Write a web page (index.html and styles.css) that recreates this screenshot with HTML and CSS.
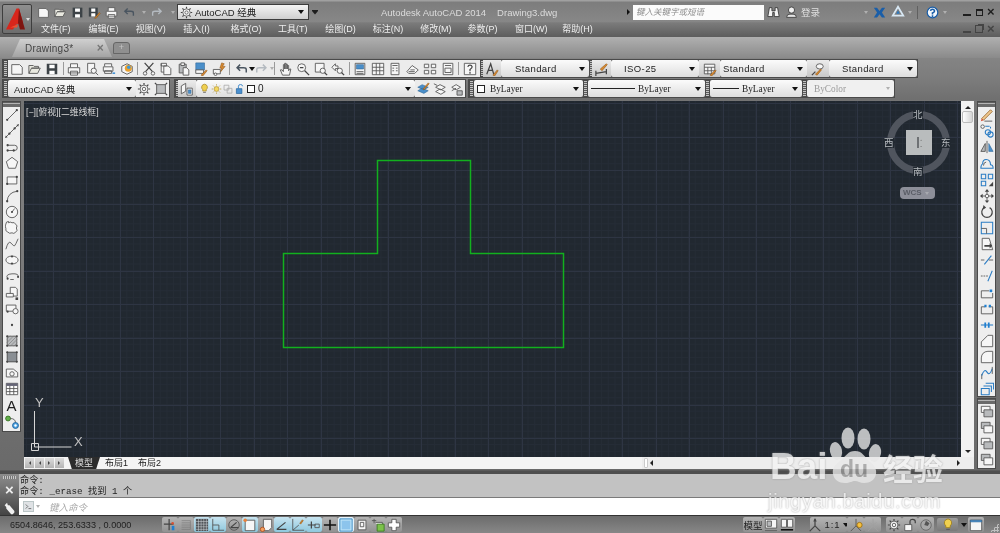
FILE: index.html
```html
<!DOCTYPE html>
<html lang="zh">
<head>
<meta charset="utf-8">
<title>AutoCAD 2014</title>
<link rel="stylesheet" href="styles.css">
</head>
<body>
<svg class="defs" aria-hidden="true">
  <symbol id="new" viewBox="0 0 16 16"><path class="w" d="M2 3h9l3 3v8H2z"/></symbol>
  <symbol id="open" viewBox="0 0 16 16"><path class="y" d="M1 13V4h5l1 1h5v2H4l-3 6h10l3-6H4"/></symbol>
  <symbol id="save" viewBox="0 0 16 16"><path class="d" d="M2 2h12v12H2z"/><path class="w0" d="M5 3h6v4H5zM5 10h6v4H5z"/></symbol>
  <symbol id="saveas" viewBox="0 0 16 16"><path class="d" d="M1 2h11v11H1z"/><path class="w0" d="M4 3h5v4H4zM4 9h5v4H4z"/><path class="o" d="M8 15l6-7 1 1-5 6z"/></symbol>
  <symbol id="print" viewBox="0 0 16 16"><path class="w" d="M4 6V2h8v4M1.500 6.500h13v6h-13zM4 10.500h8V15H4z"/></symbol>
  <symbol id="preview" viewBox="0 0 16 16"><path class="w" d="M3 1.500h8v11H3z"/><circle class="w" cx="10" cy="10" r="3"/><path class="l" d="M12 12l3 3"/></symbol>
  <symbol id="plot" viewBox="0 0 16 16"><path class="w" d="M3 5V2h8v3M1.500 5.500h11v5h-11zM3 10h8v3H3z"/><path class="b" d="M12 12h3v1.500h-3z"/></symbol>
  <symbol id="ball" viewBox="0 0 16 16"><path class="w" d="M2 5l6-3 6 3v6l-6 3-6-3z"/><circle cx="9.500" cy="7" r="4" fill="#e8a030"/><circle cx="10" cy="6" r="2" fill="#3e9ad8"/></symbol>
  <symbol id="cut" viewBox="0 0 16 16"><path class="l2" d="M3 1l9 10M13 1L4 11"/><circle class="w" cx="3.500" cy="13" r="2"/><circle class="w" cx="12.500" cy="13" r="2"/></symbol>
  <symbol id="copy" viewBox="0 0 16 16"><path class="w" d="M2.500 1.500h6v3h-6zM2.500 1.500v10h3M5.500 4.500h5l3 3v7h-8z"/></symbol>
  <symbol id="paste" viewBox="0 0 16 16"><path class="g" d="M2.500 2.500h8v10h-8z"/><path class="w" d="M4.500 1h4v3h-4zM7 6.500h4l2.500 2.500v6H7z"/></symbol>
  <symbol id="match" viewBox="0 0 16 16"><path class="bl" d="M2 1h10v8H2z"/><path class="w" d="M2 9h9v4H2z"/><path class="o" d="M8 15l6-6 1 1-5 6z"/></symbol>
  <symbol id="block" viewBox="0 0 16 16"><path class="w" d="M1.500 8.500h8v5h-8z"/><circle class="w" cx="4" cy="14" r="1.500"/><path class="o" d="M11 1l3 1-2 3h3l-5 6 1-4H9z"/></symbol>
  <symbol id="undo" viewBox="0 0 16 16"><path class="bd" d="M14 12V8.500Q14 6.500 11 6.500H4M7 3L3.500 6.500 7 10"/></symbol>
  <symbol id="redo" viewBox="0 0 16 16"><path class="bf" d="M2 12V8.500Q2 6.500 5 6.500h7M9 3l3.500 3.500L9 10"/></symbol>
  <symbol id="hand" viewBox="0 0 16 16"><path class="w" d="M4 15L1.500 9l2 0 1.500 2V3h1.500v5V1.500H8V8V2.500h1.500V8V4H11v6l1-2h1.500L12 15z"/></symbol>
  <symbol id="zrt" viewBox="0 0 16 16"><circle class="w" cx="6.500" cy="6.500" r="4.500"/><path class="l2" d="M10 10l5 5M4.500 6.500h4"/></symbol>
  <symbol id="zwin" viewBox="0 0 16 16"><path class="w" d="M1.500 1.500h10v10h-10z"/><circle class="w" cx="10" cy="10" r="3"/><path class="l2" d="M12 12l3 3"/></symbol>
  <symbol id="zprev" viewBox="0 0 16 16"><path class="w" d="M1 6l4-4v2.500h3v3H5V10z"/><circle class="w" cx="10" cy="10" r="3"/><path class="l2" d="M12 12l3 3"/></symbol>
  <symbol id="props" viewBox="0 0 16 16"><path class="w" d="M2.500 1.500h11v13h-11z"/><path class="bl" d="M4 3h8v5H4z"/><path class="l" d="M4 11h8M4 13h8"/></symbol>
  <symbol id="dc" viewBox="0 0 16 16"><path class="w" d="M1.500 1.500h13v13h-13zM6 1.500v13M10 1.500v13M1.500 6h13M1.500 10h13"/></symbol>
  <symbol id="palette" viewBox="0 0 16 16"><path class="w" d="M3.500 1.500h9v13h-9z"/><path class="l" d="M5 4h6M5 7h2M9 7h2M5 10h2M9 10h2"/></symbol>
  <symbol id="sheet" viewBox="0 0 16 16"><path class="w" d="M1 11l6-7 7 5-4 4H3z"/><path class="l" d="M3 11h7M5 9h5"/></symbol>
  <symbol id="mark" viewBox="0 0 16 16"><path class="w" d="M1.500 2.500h5v4h-5zM9.500 2.500h5v4h-5zM1.500 9.500h5v4h-5zM9.500 9.500h5v4h-5z"/></symbol>
  <symbol id="calc" viewBox="0 0 16 16"><path class="w" d="M2.500 1.500h11v13h-11z"/><path class="l" d="M4.500 4h7M4.500 7h7v5h-7z"/></symbol>
  <symbol id="help" viewBox="0 0 16 16"><path class="w" d="M1.500 1.500h13v13h-13z"/><path class="l2" d="M5.500 5.500Q6 3.500 8 3.500t2.500 2Q10.500 7 8 8.500v2M8 11.500v2"/></symbol>
  <symbol id="txtstyle" viewBox="0 0 16 16"><path class="l2" d="M2 14L6.500 2 10 14M4 9.500h5"/><path class="o" d="M9 15l5-6 1 1-4 6z"/></symbol>
  <symbol id="dimstyle" viewBox="0 0 16 16"><path class="l2" d="M1 13l12-2M1 10v6M13 8v6"/><path class="o" d="M6 8l7-6 1 1-6 7z"/></symbol>
  <symbol id="tblstyle" viewBox="0 0 16 16"><path class="w" d="M1.500 2.500h12v11h-12zM1.500 6h12M1.500 10h12M5.500 6v8M9.500 6v8"/><path class="o" d="M8 15l6-6 1 1-5 6z"/></symbol>
  <symbol id="mlstyle" viewBox="0 0 16 16"><path class="w" d="M10 2q4 0 4 3t-4 3-4-3 4-3z"/><path class="l2" d="M1 15l4-4"/><path class="o" d="M5 14l6-6 1 1-5 6z"/></symbol>
  <symbol id="gear" viewBox="0 0 16 16"><circle class="w" cx="8" cy="8" r="4.500"/><circle class="w" cx="8" cy="8" r="2"/><path class="l2" d="M8 1v2M8 13v2M1 8h2M13 8h2M3 3l1.500 1.500M11.500 11.500L13 13M13 3l-1.500 1.500M3 13l1.500-1.500"/></symbol>
  <symbol id="lockui" viewBox="0 0 16 16"><path class="g" d="M3 3h10v10H3z"/><path class="l2" d="M1 1l2 2M15 1l-2 2M1 15l2-2M15 15l-2-2"/></symbol>
  <symbol id="layers" viewBox="0 0 16 16"><path class="w" d="M1.500 4.500l5-3v9l-5 3zM8 7h6v8H8z"/><path class="bl" d="M9.500 9h3v4h-3z"/></symbol>
  <symbol id="bulb" viewBox="0 0 16 16"><path fill="#f0d050" stroke="#a08020" d="M8 1a4.500 4.500 0 0 1 2.500 8v2h-5V9A4.500 4.500 0 0 1 8 1z"/><path class="l" d="M6 13h4"/></symbol>
  <symbol id="sun" viewBox="0 0 16 16"><circle cx="8" cy="8" r="3.500" fill="#f4d860" stroke="#b09030"/><path class="sunray" d="M8 1v2M8 13v2M1 8h2M13 8h2M3 3l1.500 1.500M11.500 11.500L13 13M13 3l-1.500 1.500M3 13l1.500-1.500"/></symbol>
  <symbol id="freeze" viewBox="0 0 16 16"><path class="lg" d="M1.500 2.500h7v7h-7zM6 7h7v7H6z"/></symbol>
  <symbol id="lockb" viewBox="0 0 16 16"><path class="bd2" d="M5 7V4q0-2.500 3-2.500T11 4"/><path fill="#4a90d0" stroke="#20609a" d="M2 7.500h8v7H2z"/></symbol>
  <symbol id="lyrmatch" viewBox="0 0 16 16"><path class="bl" d="M2 10l5-3 7 3-5 3zM2 6l5-3 7 3-5 3z"/><path class="o" d="M8 8l6-7 1 1-6 7z"/></symbol>
  <symbol id="lyrcur" viewBox="0 0 16 16"><path class="w" d="M3 6l5-3 6 3-5 3zM3 11l5-3 6 3-5 3z"/><path class="l" d="M1 2l4 2"/></symbol>
  <symbol id="lyrprev" viewBox="0 0 16 16"><path class="w" d="M2 6l5-3 5 3-5 3zM2 10l5-3"/><path class="g" d="M8 10h6v5H8z"/></symbol>
  <symbol id="line" viewBox="0 0 16 16"><path class="l" d="M2.500 13.500l11-11"/><circle class="pt" cx="2.500" cy="13.500" r="1.300"/><circle class="pt" cx="13.500" cy="2.500" r="1.300"/></symbol>
  <symbol id="xline" viewBox="0 0 16 16"><path class="l" d="M1 15L15 1"/><circle class="pt" cx="5" cy="11" r="1.300"/><circle class="pt" cx="11" cy="5" r="1.300"/><path class="pt" d="M0 16l1-3 2 2zM16 0l-1 3-2-2z"/></symbol>
  <symbol id="pline" viewBox="0 0 16 16"><path class="l" d="M3 6h8q3 0 3 3t-3 3H3"/><circle class="pt" cx="3" cy="6" r="1.300"/><circle class="pt" cx="3" cy="12" r="1.300"/><circle class="pt" cx="10" cy="12" r="1.300"/></symbol>
  <symbol id="poly" viewBox="0 0 16 16"><path class="w" d="M8 1.500l6.500 5-2.500 7.500H4L1.500 6.500z"/></symbol>
  <symbol id="rect" viewBox="0 0 16 16"><path class="w" d="M2.500 4.500h11v8h-11z"/><circle class="pt" cx="2.500" cy="12.500" r="1.300"/><circle class="pt" cx="13.500" cy="4.500" r="1.300"/></symbol>
  <symbol id="arc" viewBox="0 0 16 16"><path class="l" d="M2.500 14Q3 4 14 2.500"/><circle class="pt" cx="2.500" cy="14" r="1.300"/><circle class="pt" cx="14" cy="2.500" r="1.300"/></symbol>
  <symbol id="circle" viewBox="0 0 16 16"><circle class="w" cx="8" cy="8" r="6.500"/><path class="l" d="M8 8l3-4"/><circle class="pt" cx="8" cy="8" r="1.200"/></symbol>
  <symbol id="cloud" viewBox="0 0 16 16"><path class="w" d="M4 2q2-1.500 4 0 3-1 4 1.500 3 2 1 4.500 2 3-1 5-2 2-4 .5-3 1.500-5-1-3-1-2-4-1.500-3 0-5 0-3 3-3z"/></symbol>
  <symbol id="spline" viewBox="0 0 16 16"><path class="l" d="M1 14Q4 3 7 7t4 3 4-8"/></symbol>
  <symbol id="ellipse" viewBox="0 0 16 16"><ellipse class="w" cx="8" cy="8" rx="7" ry="4.500"/><circle class="pt" cx="8" cy="4" r="1.200"/><circle class="pt" cx="8" cy="12" r="1.200"/></symbol>
  <symbol id="earc" viewBox="0 0 16 16"><path class="l" d="M3 11Q0 6 8 5.500t7 3.500"/><path class="l" d="M6 12h4"/><circle class="pt" cx="3" cy="11" r="1.200"/><circle class="pt" cx="15" cy="9" r="1.200"/></symbol>
  <symbol id="insert" viewBox="0 0 16 16"><path class="w" d="M6 1.500h6l2 2v8H6z"/><path class="w" d="M1.500 8.500h8v4h-8z"/><path class="pt" d="M12 13h3v3h-3z"/></symbol>
  <symbol id="wblock" viewBox="0 0 16 16"><path class="w" d="M1.500 3.500h11v7h-11z"/><circle class="w" cx="12" cy="10.500" r="3"/><circle class="pt" cx="3" cy="11" r="1.200"/></symbol>
  <symbol id="point" viewBox="0 0 16 16"><circle class="pt" cx="8" cy="8" r="1.300"/></symbol>
  <symbol id="hatch" viewBox="0 0 16 16"><path class="g" d="M2.500 2.500h11v11h-11z"/><path class="sm" d="M2 6l4-4M2 10l8-8M2 14L14 2M6 14l8-8M10 14l4-4"/><circle class="pt" cx="2.500" cy="2.500" r="1.200"/><circle class="pt" cx="13.500" cy="13.500" r="1.200"/><circle class="pt" cx="13.500" cy="2.500" r="1.200"/><circle class="pt" cx="2.500" cy="13.500" r="1.200"/></symbol>
  <symbol id="grad" viewBox="0 0 16 16"><path fill="#8a8f94" stroke="#444" d="M2.500 2.500h11v11h-11z"/><circle class="pt" cx="2.500" cy="2.500" r="1.200"/><circle class="pt" cx="13.500" cy="13.500" r="1.200"/><circle class="pt" cx="13.500" cy="2.500" r="1.200"/><circle class="pt" cx="2.500" cy="13.500" r="1.200"/></symbol>
  <symbol id="region" viewBox="0 0 16 16"><path class="w" d="M1.500 3.500h8l5 4v5h-13z"/><circle class="w" cx="8" cy="9" r="2.500"/></symbol>
  <symbol id="table" viewBox="0 0 16 16"><path fill="#fff" stroke="#555" d="M1.500 1.500h13v13h-13z"/><path fill="#667" d="M1.500 1.500h13v3h-13z"/><path class="l" d="M1.500 7.500h13M1.500 11h13M5.500 4.500v10M10 4.500v10"/></symbol>
  <symbol id="addsel" viewBox="0 0 16 16"><circle cx="3.500" cy="4" r="2.800" fill="#63b04a" stroke="#357020"/><path class="l" d="M6 4q6 0 6 5"/><circle cx="12" cy="12" r="3.400" fill="#4aa0e0" stroke="#20609a"/><circle cx="12" cy="12" r="1.400" fill="#fff"/></symbol>
  <symbol id="erase" viewBox="0 0 16 16"><path fill="#f0c890" stroke="#9a6a30" d="M2 12L12 2l2 2L4 14z"/><path fill="#d84a30" d="M2 12l2 2-3 1z"/><path class="l" d="M5 15h9"/></symbol>
  <symbol id="copyo" viewBox="0 0 16 16"><circle class="w" cx="3" cy="3" r="2"/><path class="bd2" d="M6 2.500h5M12 3v2"/><circle class="bd2" cx="9" cy="9.500" r="3"/><circle class="bd2" cx="12" cy="12" r="3"/></symbol>
  <symbol id="mirror" viewBox="0 0 16 16"><path class="l" d="M8 1v14"/><path class="g" d="M6 4v9H1z"/><path class="bl" d="M10 4v9h5z"/></symbol>
  <symbol id="offset" viewBox="0 0 16 16"><path class="bd2" d="M1 14h14q0-4-3-4 0-6-5-6-4 0-4 5-2 1-2 5z"/><path class="l" d="M4 11q0-4 3-4"/></symbol>
  <symbol id="array" viewBox="0 0 16 16"><path class="bd2" d="M1.500 1.500h5v5h-5zM9.500 1.500h5v5h-5zM1.500 9.500h5v5h-5z"/><path class="pt" d="M10 15l5-5v5z"/></symbol>
  <symbol id="move" viewBox="0 0 16 16"><path class="l" d="M2 8h12M8 2v12"/><path class="pt" d="M8 0l2.500 3h-5zM8 16l2.500-3h-5zM0 8l3-2.500v5zM16 8l-3-2.500v5z"/><circle class="w" cx="8" cy="8" r="2"/></symbol>
  <symbol id="rotate" viewBox="0 0 16 16"><path class="l2" d="M5 3a6 6 0 1 0 6 0"/><path class="pt" d="M4 0l3 3-4 2z"/></symbol>
  <symbol id="scale" viewBox="0 0 16 16"><path class="bd2" d="M1.500 1.500h13v13h-13z"/><path class="l" d="M1.500 8.500h6v6"/></symbol>
  <symbol id="stretch" viewBox="0 0 16 16"><path class="w" d="M2.500 1.500h8l4 13h-12z"/><path class="pt" d="M5 9h6V7l3 3-3 3v-2H5z"/></symbol>
  <symbol id="trim" viewBox="0 0 16 16"><path class="l" d="M1 8h4"/><path class="bd2" d="M5 13L13 3"/><path class="l" d="M10 8h5"/></symbol>
  <symbol id="extend" viewBox="0 0 16 16"><path class="sm2" d="M1 8h8"/><path class="bd2" d="M9 14l5-12"/></symbol>
  <symbol id="brkpt" viewBox="0 0 16 16"><path class="l" d="M1.500 13.500v-8h9M14.500 8v5.500h-13"/><path class="pt3" d="M11 4h3v3h-3z"/></symbol>
  <symbol id="brk" viewBox="0 0 16 16"><path class="l" d="M1.500 5.500v8h13v-8M6 5.500H1.500M10 5.500h4.500"/><path class="pt3" d="M5 3h2.500v3H5zM10 3h2.500v3H10z"/></symbol>
  <symbol id="join" viewBox="0 0 16 16"><path class="bd2" d="M1 8h14"/><path class="pt3" d="M5 5h2v6H5zM9 5h2v6H9z"/></symbol>
  <symbol id="chamfer" viewBox="0 0 16 16"><path class="w" d="M1.500 14.500V9L9 1.500h5.500v13z"/></symbol>
  <symbol id="fillet" viewBox="0 0 16 16"><path class="w" d="M1.500 14.500V9Q2 2 9 1.500h5.500v13z"/></symbol>
  <symbol id="blend" viewBox="0 0 16 16"><path class="l" d="M2 15V9"/><path class="bd2" d="M2 11Q5 2 8 7t6-4"/><path class="l" d="M14 9V1"/></symbol>
  <symbol id="explode" viewBox="0 0 16 16"><path class="bd2" d="M1.500 7.500h9v7h-9zM4 4.500h9v7M6.500 1.500h9v7"/></symbol>
  <symbol id="front" viewBox="0 0 16 16"><path class="w" d="M1.500 1.500h10v7h-10z"/><path class="g" d="M4.500 5.500h10v8h-10z"/></symbol>
  <symbol id="back" viewBox="0 0 16 16"><path class="g" d="M1.500 1.500h10v7h-10z"/><path class="w" d="M4.500 5.500h10v8h-10z"/></symbol>
  <symbol id="snap" viewBox="0 0 16 16"><path class="l2" d="M1 7h11M7 1v13"/><path class="pt3" d="M10 9h3v5h-3z"/><circle cx="11" cy="6" r="1.500" fill="#d85030"/></symbol>
  <symbol id="snapg" viewBox="0 0 16 16"><path class="sm" d="M3 3h10M3 5.500h10M3 8h10M3 10.500h10M3 13h10M13 3v10"/></symbol>
  <symbol id="gridb" viewBox="0 0 16 16"><path class="gb" d="M1 1h14v14H1z"/><path class="gw" d="M4 1v14M7 1v14M10 1v14M13 1v14M1 4h14M1 7h14M1 10h14M1 13h14"/></symbol>
  <symbol id="ortho" viewBox="0 0 16 16"><path class="l" d="M2 1v13h13M2 8h7v6"/></symbol>
  <symbol id="polar" viewBox="0 0 16 16"><circle class="l" cx="8" cy="8" r="6"/><path class="l2" d="M4 11h9M4 11l7-6"/></symbol>
  <symbol id="osnap" viewBox="0 0 16 16"><path class="w" d="M2.500 2.500h11v12h-11z"/><circle cx="2.500" cy="2.500" r="2" fill="#e8803a"/></symbol>
  <symbol id="d3snap" viewBox="0 0 16 16"><path class="w" d="M5 1.500h9.500V11L11 14.500H5z"/><circle cx="4" cy="13" r="2.500" fill="#f4a060" stroke="#b05020"/></symbol>
  <symbol id="otrack" viewBox="0 0 16 16"><path class="l2" d="M2 13L12 5M2 13h11"/></symbol>
  <symbol id="ducs" viewBox="0 0 16 16"><path class="l" d="M2 1v13h13M2 14l7-6"/><path class="o" d="M10 6l3-4 1 1-3 4z"/></symbol>
  <symbol id="dyn" viewBox="0 0 16 16"><path class="l2" d="M1 8h9M5 4v8"/><path class="l" d="M9 7h5v4H9z"/></symbol>
  <symbol id="lwt" viewBox="0 0 16 16"><path class="k" d="M1 8h14M8 2v12"/></symbol>
  <symbol id="tpy" viewBox="0 0 16 16"><path fill="#bfe4f7" stroke="#2a80c0" d="M1 1h14v14H1z"/><path fill="#8cc4ec" d="M3 3h10v10H3z"/></symbol>
  <symbol id="qp" viewBox="0 0 16 16"><path class="w" d="M3.500 2.500h9v11h-9z"/><path class="l" d="M6 5h4v5H6z"/></symbol>
  <symbol id="sc" viewBox="0 0 16 16"><path class="l" d="M1 3h5M3.500 1v5"/><path class="w" d="M5 5h8v8"/><path fill="#7cc24a" stroke="#3a7a20" d="M7 7h8v8H7z"/></symbol>
  <symbol id="am" viewBox="0 0 16 16"><path fill="#fff" stroke="#555" d="M5.500 1.500h5v4h4v5h-4v4h-5v-4h-4v-5h4z"/></symbol>
  <symbol id="modelb" viewBox="0 0 16 16"><path class="w" d="M1.500 1.500h13v10h-13z"/><path class="g" d="M3.500 3.500h5v6h-5z"/><path class="l" d="M1 14.500h14"/></symbol>
  <symbol id="layoutb" viewBox="0 0 16 16"><path class="w" d="M1.500 1.500h6v9h-6zM8.500 1.500h6v9h-6z"/><path class="k" d="M1 13.500h14"/></symbol>
  <symbol id="annot" viewBox="0 0 16 16"><path class="l2" d="M8 1v8M8 9l-6 6M8 9l6 6"/><path class="pt" d="M8 0l2 4H6z"/></symbol>
  <symbol id="annoa" viewBox="0 0 16 16"><path class="l" d="M8 1v8M8 9l-6 6M8 9l6 6"/><circle cx="12" cy="8" r="3" fill="#f4c040" stroke="#a07010"/></symbol>
  <symbol id="annob" viewBox="0 0 16 16"><path class="lg" d="M8 1v8M8 9l-6 6M8 9l6 6M4 5l8 6M12 5l-8 6"/></symbol>
  <symbol id="lock2" viewBox="0 0 16 16"><path class="l2" d="M8 7V4q0-2.500 3-2.500T14 4v2"/><path class="w" d="M2 7.500h8v7H2z"/></symbol>
  <symbol id="hw" viewBox="0 0 16 16"><circle fill="#a8a8a8" stroke="#666" cx="8" cy="8" r="6"/><path fill="#555" d="M8 3l4 3-2 3-4-1z"/></symbol>
  <symbol id="winp" viewBox="0 0 16 16"><path class="w" d="M1.500 2.500h13v12h-13z"/><path class="bl" d="M1.500 2.500h13v2h-13z"/></symbol>
  <symbol id="binoc" viewBox="0 0 16 16"><path fill="#f4f4f4" stroke="#333" d="M3 2h3v4h4V2h3l2 11H9V8H7v5H1z"/></symbol>
  <symbol id="user" viewBox="0 0 16 16"><circle fill="#f0f0f0" stroke="#333" cx="8" cy="5" r="3.800"/><path fill="#e4e4e4" stroke="#333" d="M2 14q0-4 4-4h4q4 0 4 4z"/></symbol>
  <symbol id="xchg" viewBox="0 0 16 16"><path fill="#1a5ea8" d="M1 2h4l3 4 3-4h4l-4 6 4 6h-4l-3-4-3 4H1l4-6z"/></symbol>
  <symbol id="tri" viewBox="0 0 16 16"><path fill="none" stroke="#d8e8f4" stroke-width="2" d="M8 2l6 10H2z"/><path fill="#2a78c0" d="M8 6l2 4H6z"/></symbol>
  <symbol id="qm" viewBox="0 0 16 16"><circle fill="#f4f8fc" stroke="#1a5ea8" stroke-width="1.500" cx="8" cy="8" r="6.500"/><path fill="none" stroke="#1a5ea8" stroke-width="2" d="M5.500 6Q6 4 8 4t2.500 2Q10.500 7.500 8 8.500v2M8 11.500v2"/></symbol>
  <symbol id="cmdp" viewBox="0 0 16 16"><path fill="#dfe2e5" stroke="#9aa" d="M.5.5h15v15H.5z"/><path fill="none" stroke="#444" d="M4 5l3 3-3 3M8 11h4"/></symbol>
  <symbol id="wrench" viewBox="0 0 16 16"><path fill="#f0f0f0" d="M2 4l3-3 1 3 2 0 6 7 0 2-2 2-2 0-6-7 0-2z"/></symbol>
</svg>

<div class="app">
  <header class="top">
    <div class="logo">
      <svg class="logo-a" viewBox="0 0 20 22"><path fill="#d8261c" d="M0 21L10.500 0H13l4 14-7 2-3 5z"/><path fill="#7e1410" d="M13 0l6 21h-5l-2-7z"/><path fill="#f05030" d="M4 19l5-2 3-1-1 3z"/></svg>
      <span class="caret dark"></span>
    </div>
    <div class="top-main">
      <div class="qat">
        <div class="qat-icons">
          <svg class="ic"><use href="#new"/></svg>
          <svg class="ic"><use href="#open"/></svg>
          <svg class="ic"><use href="#save"/></svg>
          <svg class="ic"><use href="#saveas"/></svg>
          <svg class="ic"><use href="#print"/></svg>
          <svg class="ic"><use href="#undo"/></svg>
          <span class="caret"></span>
          <svg class="ic"><use href="#redo"/></svg>
          <span class="caret"></span>
        </div>
        <div class="ws-combo">
          <svg class="ic"><use href="#gear"/></svg>
          <span class="ws-name">AutoCAD 经典</span>
          <span class="caret black"></span>
        </div>
        <span class="qat-more"></span>
        <div class="title-text"><span>Autodesk AutoCAD 2014</span><span>Drawing3.dwg</span></div>
        <span class="tri-right"></span>
        <div class="search">键入关键字或短语</div>
        <svg class="ic bin"><use href="#binoc"/></svg>
        <svg class="ic usr"><use href="#user"/></svg>
        <span class="login">登录</span>
        <span class="caret mr"></span>
        <svg class="ic xc"><use href="#xchg"/></svg>
        <svg class="ic tri"><use href="#tri"/></svg>
        <span class="caret c-tri"></span>
        <span class="vsep"></span>
        <svg class="ic qm"><use href="#qm"/></svg>
        <span class="caret c-qm"></span>
        <div class="win-btns"><span class="wb-min"></span><span class="wb-max"></span><span class="wb-x">×</span></div>
      </div>
      <nav class="menu">
        <span>文件(F)</span><span>编辑(E)</span><span>视图(V)</span><span>插入(I)</span><span>格式(O)</span><span>工具(T)</span><span>绘图(D)</span><span>标注(N)</span><span>修改(M)</span><span>参数(P)</span><span>窗口(W)</span><span>帮助(H)</span>
        <div class="win-btns doc"><span class="wb-min"></span><span class="wb-rest"></span><span class="wb-x">×</span></div>
      </nav>
    </div>
  </header>

  <div class="tabstrip">
    <div class="doc-tab"><span>Drawing3*</span><span class="tab-x">×</span></div>
    <div class="new-tab">+</div>
  </div>

  <div class="tools">
    <div class="toolrow">
      <div class="bar">
        <span class="grip"></span>
        <div class="icons i1">
          <svg class="ic"><use href="#new"/></svg><svg class="ic"><use href="#open"/></svg><svg class="ic"><use href="#save"/></svg>
          <i class="sep"></i>
          <svg class="ic"><use href="#print"/></svg><svg class="ic"><use href="#preview"/></svg><svg class="ic"><use href="#plot"/></svg><svg class="ic"><use href="#ball"/></svg>
          <i class="sep"></i>
          <svg class="ic"><use href="#cut"/></svg><svg class="ic"><use href="#copy"/></svg><svg class="ic"><use href="#paste"/></svg><svg class="ic"><use href="#match"/></svg><svg class="ic"><use href="#block"/></svg>
          <i class="sep"></i>
          <svg class="ic"><use href="#undo"/></svg><span class="caret black"></span><svg class="ic"><use href="#redo"/></svg><span class="caret"></span>
          <i class="sep"></i>
          <svg class="ic"><use href="#hand"/></svg><svg class="ic"><use href="#zrt"/></svg><svg class="ic"><use href="#zwin"/></svg><svg class="ic"><use href="#zprev"/></svg>
          <i class="sep"></i>
          <svg class="ic"><use href="#props"/></svg><svg class="ic"><use href="#dc"/></svg><svg class="ic"><use href="#palette"/></svg><svg class="ic"><use href="#sheet"/></svg><svg class="ic"><use href="#mark"/></svg><svg class="ic"><use href="#calc"/></svg>
          <i class="sep"></i>
          <svg class="ic"><use href="#help"/></svg>
        </div>
        <span class="grip thin"></span>
        <div class="icons i0 i18"><svg class="ic"><use href="#txtstyle"/></svg></div>
        <div class="combo c-style p14"><span>Standard</span><span class="caret black"></span></div>
        <span class="grip thin"></span>
        <div class="icons i0 i19"><svg class="ic"><use href="#dimstyle"/></svg></div>
        <div class="combo c-style p13"><span>ISO-25</span><span class="caret black"></span></div>
        <div class="icons i0 i21"><svg class="ic"><use href="#tblstyle"/></svg></div>
        <div class="combo c-style2 p3"><span>Standard</span><span class="caret black"></span></div>
        <div class="icons i0 i22"><svg class="ic"><use href="#mlstyle"/></svg></div>
        <div class="combo c-style p13"><span>Standard</span><span class="caret black"></span></div>
      </div>
    </div>
    <div class="toolrow">
      <div class="bar">
        <span class="grip"></span>
        <div class="combo c-ws"><span>AutoCAD 经典</span><span class="caret black"></span></div>
        <div class="icons i2"><svg class="ic"><use href="#gear"/></svg><svg class="ic"><use href="#lockui"/></svg></div>
      </div>
      <div class="bar">
        <span class="grip thin"></span>
        <div class="icons i0 i18"><svg class="ic"><use href="#layers"/></svg></div>
        <div class="combo c-layer">
          <svg class="lic"><use href="#bulb"/></svg><svg class="lic"><use href="#sun"/></svg><svg class="lic"><use href="#freeze"/></svg><svg class="lic"><use href="#lockb"/></svg>
          <i class="swatch"></i><span class="lname">0</span><span class="caret black"></span>
        </div>
        <div class="icons i3"><svg class="ic"><use href="#lyrmatch"/></svg><svg class="ic"><use href="#lyrcur"/></svg><svg class="ic"><use href="#lyrprev"/></svg></div>
      </div>
      <div class="bar serif">
        <span class="grip"></span>
        <div class="combo c-color"><i class="swatch"></i><span class="lname">ByLayer</span><span class="caret black"></span></div>
        <span class="grip"></span>
        <div class="combo c-ltype"><i class="ln l1"></i><span>ByLayer</span><span class="caret black"></span></div>
        <span class="grip"></span>
        <div class="combo c-lw"><i class="ln l2w"></i><span>ByLayer</span><span class="caret black"></span></div>
        <span class="grip"></span>
        <div class="combo c-pl"><span>ByColor</span><span class="caret"></span></div>
      </div>
    </div>
  </div>

  <main class="main">
    <aside class="vbar left">
      <span class="hgrip"></span>
      <div class="vicons">
        <svg class="ic"><use href="#line"/></svg><svg class="ic"><use href="#xline"/></svg><svg class="ic"><use href="#pline"/></svg><svg class="ic"><use href="#poly"/></svg><svg class="ic"><use href="#rect"/></svg><svg class="ic"><use href="#arc"/></svg><svg class="ic"><use href="#circle"/></svg><svg class="ic"><use href="#cloud"/></svg><svg class="ic"><use href="#spline"/></svg><svg class="ic"><use href="#ellipse"/></svg><svg class="ic"><use href="#earc"/></svg><svg class="ic"><use href="#insert"/></svg><svg class="ic"><use href="#wblock"/></svg><svg class="ic"><use href="#point"/></svg><svg class="ic"><use href="#hatch"/></svg><svg class="ic"><use href="#grad"/></svg><svg class="ic"><use href="#region"/></svg><svg class="ic"><use href="#table"/></svg><span class="bigA">A</span><svg class="ic"><use href="#addsel"/></svg>
      </div>
    </aside>

    <section class="workspace">
      <div class="ws-top">
        <div class="canvas">
          <span class="vp-label">[−][俯视][二维线框]</span>
          <svg class="drawing" viewBox="0 0 937 356" width="937" height="356">
            <path class="shape" d="M353.500 59.500h93v93h93v94h-280v-94h94z"/>
            <path class="ucs" d="M10.500 310v36h37M7.500 342.500h7v7h-7z"/>
          </svg>
          <span class="ucs-y">Y</span><span class="ucs-x">X</span>
          <div class="cube">
            <div class="ring"></div>
            <span class="dir n">北</span><span class="dir s">南</span><span class="dir e">东</span><span class="dir w2">西</span>
            <div class="face"><i></i><b>⁚</b></div>
            <div class="wcs">WCS<span class="caret wc"></span></div>
          </div>
        </div>
        <div class="vscroll">
          <span class="up"></span>
          <span class="thumb"></span>
          <span class="down"></span>
        </div>
      </div>
      <div class="ws-bottom">
        <div class="nav"><span class="n-first"></span><span class="n-prev"></span><span class="n-next"></span><span class="n-last"></span></div>
        <div class="ltabs"><span class="ltab on">模型</span><span class="ltab">布局1</span><span class="ltab">布局2</span></div>
        <div class="hscroll"><span class="hthumb"></span><span class="hl"></span><span class="hr"></span></div>
      </div>
    </section>

    <div class="rcol">
      <aside class="vbar right">
        <span class="hgrip"></span>
        <div class="vicons r">
          <svg class="ic"><use href="#erase"/></svg><svg class="ic"><use href="#copyo"/></svg><svg class="ic"><use href="#mirror"/></svg><svg class="ic"><use href="#offset"/></svg><svg class="ic"><use href="#array"/></svg><svg class="ic"><use href="#move"/></svg><svg class="ic"><use href="#rotate"/></svg><svg class="ic"><use href="#scale"/></svg><svg class="ic"><use href="#stretch"/></svg><svg class="ic"><use href="#trim"/></svg><svg class="ic"><use href="#extend"/></svg><svg class="ic"><use href="#brkpt"/></svg><svg class="ic"><use href="#brk"/></svg><svg class="ic"><use href="#join"/></svg><svg class="ic"><use href="#chamfer"/></svg><svg class="ic"><use href="#fillet"/></svg><svg class="ic"><use href="#blend"/></svg><svg class="ic"><use href="#explode"/></svg>
        </div>
      </aside>
      <aside class="vbar right second">
        <span class="hgrip"></span>
        <div class="vicons r">
          <svg class="ic"><use href="#front"/></svg><svg class="ic"><use href="#back"/></svg><svg class="ic"><use href="#front"/></svg><svg class="ic"><use href="#back"/></svg>
        </div>
      </aside>
    </div>
  </main>

  <section class="command">
    <div class="cmd-side">
      <span class="cmd-grip"></span>
      <span class="cmd-x">×</span>
      <svg class="ic wr"><use href="#wrench"/></svg>
    </div>
    <div class="cmd-body">
      <div class="cmd-hist"><p>命令:</p><p>命令: _erase 找到 1 个</p></div>
      <div class="cmd-in"><svg class="ic"><use href="#cmdp"/></svg><span class="caret"></span><span class="ph">键入命令</span></div>
    </div>
  </section>

  <footer class="status">
    <span class="coords">6504.8646, 253.6333 , 0.0000</span>
    <div class="sgroup toggles">
      <span class="tg"><svg class="ic"><use href="#snap"/></svg></span>
      <span class="tg"><svg class="ic"><use href="#snapg"/></svg></span>
      <span class="tg on"><svg class="ic"><use href="#gridb"/></svg></span>
      <span class="tg on"><svg class="ic"><use href="#ortho"/></svg></span>
      <span class="tg"><svg class="ic"><use href="#polar"/></svg></span>
      <span class="tg on"><svg class="ic"><use href="#osnap"/></svg></span>
      <span class="tg"><svg class="ic"><use href="#d3snap"/></svg></span>
      <span class="tg on"><svg class="ic"><use href="#otrack"/></svg></span>
      <span class="tg on"><svg class="ic"><use href="#ducs"/></svg></span>
      <span class="tg on"><svg class="ic"><use href="#dyn"/></svg></span>
      <span class="tg"><svg class="ic"><use href="#lwt"/></svg></span>
      <span class="tg hot"><svg class="ic"><use href="#tpy"/></svg></span>
      <span class="tg"><svg class="ic"><use href="#qp"/></svg></span>
      <span class="tg"><svg class="ic"><use href="#sc"/></svg></span>
      <span class="tg"><svg class="ic"><use href="#am"/></svg></span>
    </div>
    <div class="sgroup s-model"><span class="tg wide">模型</span><span class="tg"><svg class="ic"><use href="#modelb"/></svg></span><span class="tg"><svg class="ic"><use href="#layoutb"/></svg></span></div>
    <div class="sgroup s-anno"><span class="tg scale"><svg class="ic"><use href="#annot"/></svg>1:1<i class="caret black"></i></span><span class="tg t17"><svg class="ic"><use href="#annoa"/></svg></span><span class="tg t17"><svg class="ic"><use href="#annob"/></svg></span></div>
    <div class="sgroup s-work"><span class="tg"><svg class="ic"><use href="#gear"/></svg></span><span class="tg"><svg class="ic"><use href="#lock2"/></svg></span><span class="tg"><svg class="ic"><use href="#hw"/></svg></span></div>
    <div class="sgroup s-iso"><span class="tg iso"><svg class="ic"><use href="#bulb"/></svg></span></div>
    <span class="caret black scaret"></span>
    <div class="sgroup s-clean"><span class="tg"><svg class="ic"><use href="#winp"/></svg></span></div>
    <span class="resize"></span>
  </footer>

  <div class="watermark">
    <svg class="paw" viewBox="0 0 56 60"><ellipse cx="22" cy="12" rx="6.500" ry="10.500"/><ellipse cx="38" cy="13" rx="6.500" ry="10.500"/><ellipse cx="10" cy="25" rx="6" ry="9" transform="rotate(-12 10 25)"/><ellipse cx="49" cy="27" rx="6" ry="9" transform="rotate(10 49 27)"/><path d="M29 25c7 0 9 5 14 10 5 4 8 8 7 13-1 6-6 9-12 9-4 0-6-2-9-2s-5 2-10 2c-6 0-11-3-12-9-1-6 2-9 7-13 6-5 8-10 15-10z"/></svg>
    <span class="wm-bai">Bai</span>
    <span class="wm-du">du</span>
    <span class="wm-cn">经验</span>
    <span class="wm-url">jingyan.baidu.com</span>
  </div>
</div>
</body>
</html>
```

FILE: styles.css
```css
* { box-sizing: border-box; }
html, body { margin: 0; padding: 0; }
body { width: 1000px; height: 533px; overflow: hidden; background: #6e6e6e; font-family: "Liberation Sans", "Noto Sans CJK SC", sans-serif; font-size: 10px; }
p { margin: 0; }
.defs { position: absolute; width: 0; height: 0; }

/* svg icon palette */
.w { fill: #f6f6f6; stroke: #565656; stroke-width: 1; }
.w0 { fill: #fff; }
.d { fill: #3d4347; }
.y { fill: #e9e9e0; stroke: #555; }
.o { fill: #d88a30; stroke: #8a4e10; stroke-width: .6; }
.l { fill: none; stroke: #555; stroke-width: 1; }
.l2 { fill: none; stroke: #444; stroke-width: 1.400; }
.lg { fill: none; stroke: #a0a0a0; stroke-width: 1; }
.b { fill: #1f7fd0; }
.bl { fill: #4a8fca; stroke: #2a5f90; stroke-width: .6; }
.g { fill: #b8babc; stroke: #565656; }
.bd { fill: none; stroke: #4a5560; stroke-width: 1.700; }
.bf { fill: none; stroke: #b4bac0; stroke-width: 1.700; }
.bd2 { fill: none; stroke: #2a7cc4; stroke-width: 1.200; }
.pt { fill: #444; }
.pt3 { fill: #1f7fd0; }
.sm { fill: none; stroke: #777; stroke-width: .7; }
.sm2 { fill: none; stroke: #555; stroke-width: 1; stroke-dasharray: 2 1; }
.sunray { fill: none; stroke: #b09030; stroke-width: 1; }
.gb { fill: #505458; }
.gw { fill: none; stroke: #d0d4d8; stroke-width: .6; }
.k { fill: none; stroke: #111; stroke-width: 1.800; }

.ic { width: 16px; height: 16px; flex: none; display: block; }
.lic { width: 11px; height: 14px; flex: none; display: block; margin-right: 1px; }

.caret { display: inline-block; flex: none; width: 0; height: 0; border-left: 2.500px solid transparent; border-right: 2.500px solid transparent; border-top: 3px solid #b0b0b0; }
.caret.black { border-top-color: #111; border-left-width: 3.500px; border-right-width: 3.500px; border-top-width: 4px; }
.caret.dark { border-top-color: #ddd; }

.app { position: relative; width: 1000px; height: 533px; display: flex; flex-direction: column; filter: blur(.35px); }

/* title + menu */
.top { height: 37px; flex: none; display: flex; background: linear-gradient(#a0a0a0 0 1px, #7d7d7d 2px, #878787 58%, #7b7b7b 62%, #5d5d5d); }
.logo { width: 30px; height: 30px; margin: 4px 0 0 2px; flex: none; display: flex; align-items: center; padding-left: 3px; background: linear-gradient(#8f8f8f, #6d6d6d); border: 1px solid #3e3e3e; border-radius: 2px; }
.logo-a { width: 20px; height: 23px; }
.top-main { flex: 1; min-width: 0; display: flex; flex-direction: column; padding-top: 3px; }
.qat { height: 18px; display: flex; align-items: center; }
.qat-icons { margin-left: 5px; width: 140px; flex: none; display: flex; align-items: center; }
.qat-icons .ic { width: 13px; height: 13px; margin-right: 4px; }
.qat-icons .caret { margin: 0 5px 0 3px; }
.ws-combo { width: 132px; height: 16px; display: flex; align-items: center; gap: 2px; padding: 0 4px 0 2px; background: linear-gradient(#f4f4f4, #cfcfcf); border: 1px solid #3c3c3c; color: #222; font-size: 9.500px; flex: none; }
.ws-combo .ic { width: 13px; height: 13px; }
.ws-name { flex: 1; }
.qat-more { width: 6px; height: 5px; margin-left: 3px; flex: none; background: #1d1d1d; clip-path: polygon(0 0, 100% 0, 100% 30%, 50% 100%, 0 30%); }
.title-text { width: 309px; padding-left: 63px; display: flex; gap: 11px; color: #dcdcdc; font-size: 9.500px; white-space: nowrap; flex: none; }
.tri-right { width: 0; height: 0; flex: none; margin-right: 3px; border-left: 3px solid #111; border-top: 3px solid transparent; border-bottom: 3px solid transparent; }
.search { width: 131px; height: 15px; flex: none; background: #fbfbfb; color: #8e8e8e; font-size: 8.500px; font-style: italic; padding: 1px 0 0 3px; line-height: 13px; }
.bin { width: 13px; height: 13px; margin-left: 3px; }
.usr { width: 13px; height: 13px; margin-left: 5px; }
.login { margin-left: 3px; color: #e0e0e0; font-size: 9.500px; width: 20px; flex: none; }
.mr { margin: 0 5px 0 43px; }
.xc { width: 13px; height: 13px; }
.tri { width: 14px; height: 14px; margin-left: 5px; }
.c-tri { margin-left: 3px; }
.vsep { width: 1px; height: 13px; background: #606060; margin: 0 8px 0 5px; flex: none; }
.qm { width: 13px; height: 13px; }
.c-qm { margin-left: 4px; }
.win-btns { margin-left: auto; margin-right: 5px; width: 32px; display: flex; align-items: center; justify-content: space-between; color: #1e1e1e; flex: none; }
.wb-min { width: 8px; height: 2px; margin-top: 6px; background: #1e1e1e; }
.wb-max { width: 7px; height: 7px; border: 1px solid #1e1e1e; border-top-width: 2px; }
.wb-rest { width: 8px; height: 8px; border: 1px solid #444; box-shadow: 2px -2px 0 -1px #444; }
.wb-x { font-size: 13px; font-weight: 700; line-height: 10px; width: 8px; }
.doc { color: #444; }
.doc .wb-min { background: #444; }
.menu { height: 15px; display: flex; align-items: center; padding-left: 9px; color: #eee; font-size: 9px; }
.menu > span { width: 47.400px; flex: none; white-space: nowrap; }

/* tab strip */
.tabstrip { height: 21px; flex: none; display: flex; align-items: flex-end; padding: 0 0 1px 12px; background: linear-gradient(#b0b0b0, #8a8a8a); }
.doc-tab { width: 100px; height: 18px; display: flex; align-items: center; padding: 0 8px 0 13px; justify-content: space-between; color: #444; font-size: 10px; background: linear-gradient(#d0d0d0, #a4a4a4); letter-spacing: .25px; clip-path: polygon(0 100%, 8% 0, 92% 0, 100% 100%); }
.tab-x { color: #777; font-size: 12px; font-weight: 700; }
.new-tab { width: 17px; height: 12px; margin: 0 0 3px 1px; border: 1px solid #666; border-radius: 3px 3px 0 0; background: #8f8f8f; color: #c4c4c4; font-size: 9px; line-height: 9px; text-align: center; }

/* toolbars */
.tools { height: 42px; flex: none; padding-top: 1px; background: linear-gradient(#848484, #7c7c7c 50%, #6f6f6f); display: flex; flex-direction: column; gap: 1px; }
.toolrow { height: 19px; display: flex; gap: 4px; padding-left: 2px; }
.bar { height: 19px; display: flex; align-items: stretch; background: #4a4a4a; padding: 1px; font-size: 9.500px; color: #222; flex: none; }
.serif { font-family: "Liberation Serif", serif; font-size: 9.300px; margin-left: -2px; }
.grip { width: 5px; flex: none; background: repeating-linear-gradient(#c4c4c4 0 1px, #5a5a5a 1px 2px); margin: 1px 0; border-left: 1px solid #4a4a4a; border-right: 1px solid #4a4a4a; }
.grip.thin { width: 3px; border-right: 0; }
.icons { display: flex; align-items: center; background: #ececec; flex: none; }
.icons .ic { width: 14px; height: 14px; }
.i0 { justify-content: center; background: linear-gradient(#ececec, #c8c8c8); }
.i18 { width: 18px; }
.i19 { width: 19px; }
.i21 { width: 21px; }
.i22 { width: 22px; }
.i1 { width: 472px; padding: 0 3px 0 2px; justify-content: space-between; }
.i1 .caret { margin: 0 -3px; }
.i2 { width: 33px; justify-content: space-around; }
.i3 { width: 50px; justify-content: space-around; }
.sep { width: 1px; height: 13px; background: #9a9a9a; flex: none; }
.combo { display: flex; align-items: center; flex: none; padding: 0 4px 0 5px; background: linear-gradient(#fbfbfb, #dedede); border-radius: 2px; white-space: nowrap; }
.combo > .caret { margin-left: auto; }
.p14 { padding-left: 14px; letter-spacing: .4px; }
.p13 { padding-left: 13px; letter-spacing: .4px; }
.p3 { padding-left: 3px; letter-spacing: .4px; }
.c-style { width: 88px; }
.c-style2 { width: 87px; }
.c-ws { width: 128px; padding-left: 6px; }
.c-layer { width: 219px; padding-left: 3px; font-size: 10px; }
.swatch { width: 8px; height: 8px; flex: none; background: #fff; border: 1px solid #222; margin-right: 3px; }
.lname { white-space: nowrap; }
.c-color { width: 109px; padding-left: 3px; }
.c-color .lname { margin-left: 2px; }
.c-ltype { width: 117px; padding-left: 3px; }
.c-lw { width: 92px; padding-left: 3px; }
.ln { height: 1px; background: #222; flex: none; margin-right: 3px; }
.l1 { width: 44px; }
.l2w { width: 26px; }
.c-pl { width: 87px; padding-left: 7px; color: #9a9a9a; background: #f0f0f0; }

/* main */
.main { height: 370px; flex: none; display: flex; background: linear-gradient(#747474, #7e7e7e 30%, #6a6a6a); }
.vbar { background: #eeeeee; border: 1px solid #4a4a4a; display: flex; flex-direction: column; flex: none; }
.left { width: 19px; height: 331px; margin: 1px 0 0 2px; }
.hgrip { height: 5px; flex: none; background: linear-gradient(#5e5e5e 0 1px, #b4b4b4 1px 2px, #6a6a6a 2px); }
.vicons { display: grid; grid-auto-rows: 16.150px; justify-items: center; align-items: center; }
.vicons .ic { width: 14px; height: 14px; }
.bigA { font-size: 15px; line-height: 16px; color: #222; }
.workspace { width: 950px; margin: 1px 0 0 3px; flex: none; display: flex; flex-direction: column; }
.ws-top { display: flex; height: 356px; flex: none; }
.canvas { position: relative; width: 937px; height: 356px; overflow: hidden;
  background-color: #212830;
  background-image:
    linear-gradient(90deg, #2e3543 0 1px, transparent 1px 33px, #2e3543 33px 34px, transparent 34px),
    linear-gradient(180deg, #2e3543 0 1px, transparent 1px 33px, #2e3543 33px 34px, transparent 34px),
    linear-gradient(90deg, #252c36 0 1px, transparent 1px),
    linear-gradient(180deg, #252c36 0 1px, transparent 1px);
  background-size: 67px 100%, 100% 67px, 6.700px 100%, 100% 6.700px;
  background-position: 29px 0, 0 36px, 2px 0, 0 2px; }
.vp-label { position: absolute; left: 2px; top: 4px; color: #d8d8d8; font-size: 8.800px; white-space: nowrap; }
.drawing { position: absolute; inset: 0; }
.shape { fill: none; stroke: #12b01e; stroke-width: 1.500; }
.ucs { fill: none; stroke: #d6d6d6; stroke-width: 1; }
.ucs-y, .ucs-x { position: absolute; color: #c0c0c0; font-size: 13px; line-height: 14px; }
.ucs-y { left: 11px; top: 295px; }
.ucs-x { left: 50px; top: 334px; }
.cube { position: absolute; left: 856px; top: 5px; width: 70px; height: 95px; color: #b8bcc0; }
.ring { position: absolute; left: 7px; top: 5px; width: 63px; height: 63px; border: 7px solid #50555e; border-radius: 50%; }
.dir { position: absolute; font-size: 9.500px; line-height: 10px; background: #212830; }
.n { left: 33px; top: 4px; }
.s { left: 33px; top: 61px; }
.e { left: 61px; top: 32px; }
.w2 { left: 4px; top: 32px; }
.face { position: absolute; left: 26px; top: 24px; width: 26px; height: 25px; background: #b9bcbd; display: flex; align-items: center; justify-content: center; gap: 1px; color: #777; }
.face i { width: 2px; height: 11px; background: #6e7174; }
.face b { font-size: 10px; font-weight: 400; }
.wcs { position: absolute; left: 20px; top: 81px; width: 35px; height: 12px; border-radius: 4px; background: #8d8f99; color: #5a5d66; font-size: 8px; line-height: 12px; font-weight: 700; padding-left: 3px; display: flex; align-items: center; gap: 3px; }
.wc { border-top-color: #a8aab0; }
.vscroll { width: 13px; height: 356px; background: #f2f2f2; display: flex; flex-direction: column; align-items: center; }
.up { margin-top: 5px; width: 0; height: 0; border: 3px solid transparent; border-bottom: 3px solid #222; border-top: 0; }
.thumb { margin-top: 2px; width: 11px; height: 12px; background: linear-gradient(90deg, #fff, #d4d4d4); border: 1px solid #bbb; border-radius: 2px; }
.down { margin-top: auto; margin-bottom: 4px; width: 0; height: 0; border: 3px solid transparent; border-top: 3px solid #222; border-bottom: 0; }
.ws-bottom { height: 12px; flex: none; display: flex; align-items: stretch; background: #f4f4f4; }
.nav { width: 44px; padding-left: 1px; display: flex; gap: 1px; flex: none; }
.nav span { width: 9px; margin: 1px 0; background: linear-gradient(#dcdcdc, #b4b4b4); position: relative; }
.nav span::after { content: ""; position: absolute; top: 3px; border: 2.500px solid transparent; }
.n-first::after, .n-prev::after { right: 3px; border-right-color: #444 !important; }
.n-next::after, .n-last::after { left: 3px; border-left-color: #444 !important; }
.ltabs { display: flex; width: 574px; flex: none; font-size: 9px; color: #222; align-items: center; }
.ltab { width: 33px; height: 12px; line-height: 12px; text-align: center; flex: none; clip-path: polygon(0 0, 100% 0, 88% 100%, 12% 100%); }
.ltab.on { width: 32px; background: #2c2c2c; color: #ddd; }
.hscroll { flex: 1; position: relative; background: #ededed; }
.hthumb { position: absolute; left: 2px; top: 1px; width: 4px; height: 10px; background: #fff; border: 1px solid #ccc; border-radius: 1px; }
.hl, .hr { position: absolute; top: 3px; width: 0; height: 0; border: 3px solid transparent; }
.hl { left: 8px; border-right-color: #222; border-left: 0; }
.hr { right: 14px; border-left-color: #222; border-right: 0; }
.rcol { width: 19px; margin: 1px 0 0 3px; flex: none; display: flex; flex-direction: column; gap: 1px; }
.right { height: 296px; }
.second { height: 71px; }

/* command line */
.command { height: 45px; flex: none; display: flex; padding-top: 3px; background: #4e4e4e; border-top: 1px solid #5a5a5a; }
.cmd-side { width: 19px; flex: none; display: flex; flex-direction: column; align-items: center; background: linear-gradient(#8d8d8d, #444); }
.cmd-grip { width: 13px; height: 4px; margin: 2px 0 3px; background: repeating-linear-gradient(90deg, #c8c8c8 0 1px, #777 1px 2px); }
.cmd-x { color: #eee; font-size: 15px; font-weight: 700; line-height: 15px; }
.wr { margin-top: 5px; width: 13px; height: 13px; }
.cmd-body { flex: 1; display: flex; flex-direction: column; min-width: 0; }
.cmd-hist { height: 24px; background: #c2c2c2; color: #222; font-family: "Liberation Mono", "Noto Sans CJK SC", monospace; font-size: 9.200px; line-height: 11px; padding: 1px 0 0 1px; border-bottom: 1px solid #7a7a7a; }
.cmd-in { height: 17px; background: #fff; display: flex; align-items: center; gap: 2px; padding-left: 4px; color: #a8a8a8; font-size: 9.500px; }
.cmd-in .ic { width: 11px; height: 11px; }
.ph { margin-left: 7px; font-style: italic; }

/* status */
.status { height: 18px; flex: none; display: flex; align-items: stretch; border-top: 1px solid #333; background: linear-gradient(#6c6c6c, #878787); padding: 1px 0; position: relative; }
.coords { width: 162px; padding-left: 10px; flex: none; color: #1e1e1e; font-size: 9.100px; line-height: 16px; white-space: nowrap; }
.sgroup { display: flex; flex: none; }
.tg { width: 16px; display: flex; align-items: center; justify-content: center; background: linear-gradient(#b4b4b4, #929292); border-radius: 2px; font-size: 9.500px; color: #222; }
.tg .ic { width: 14px; height: 14px; }
.tg.on { background: linear-gradient(#c8e4f0, #8ec8de); }
.tg.hot { background: #e6f4fb; }
.toggles { width: 240px; }
.s-model { margin-left: 341px; }
.tg.wide { width: 20px; }
.s-anno { margin-left: 15px; }
.tg.scale { width: 37px; gap: 2px; letter-spacing: 1px; }
.tg.t17 { width: 17px; }
.s-work { margin-left: 5px; }
.s-iso { margin-left: 3px; }
.tg.iso { width: 21px; background: linear-gradient(#9d9d9d, #7a7a7a); margin: 1px 0; }
.scaret { align-self: center; margin-left: 3px; margin-right: 1px; }
.resize { position: absolute; right: 1px; bottom: 1px; width: 9px; height: 9px; background: radial-gradient(circle, #c0c0c0 1px, transparent 1.200px) 0 0 / 3px 3px; clip-path: polygon(100% 0, 100% 100%, 0 100%); }

/* watermark */
.watermark { position: absolute; left: 765px; top: 426px; width: 220px; height: 100px; color: #f4f4f4; opacity: .78; pointer-events: none; }
.watermark span { position: absolute; white-space: nowrap; text-shadow: 0 0 2px #8a8a8a; }
.paw { position: absolute; left: 61px; top: 0; width: 56px; height: 60px; fill: #e8e8e8; }
.wm-bai { left: 5px; top: 21px; font-weight: 700; font-size: 37px; line-height: 40px; }
.watermark .wm-du { left: 75px; top: 30px; font-size: 23px; font-weight: 700; line-height: 26px; color: #9a9a9a; text-shadow: none; }
.wm-cn { left: 118px; top: 22px; font-size: 30px; line-height: 38px; font-family: "Noto Sans CJK SC", sans-serif; font-weight: 700; }
.wm-url { left: 3px; top: 64px; font-size: 20px; line-height: 22px; letter-spacing: .7px; }
```
